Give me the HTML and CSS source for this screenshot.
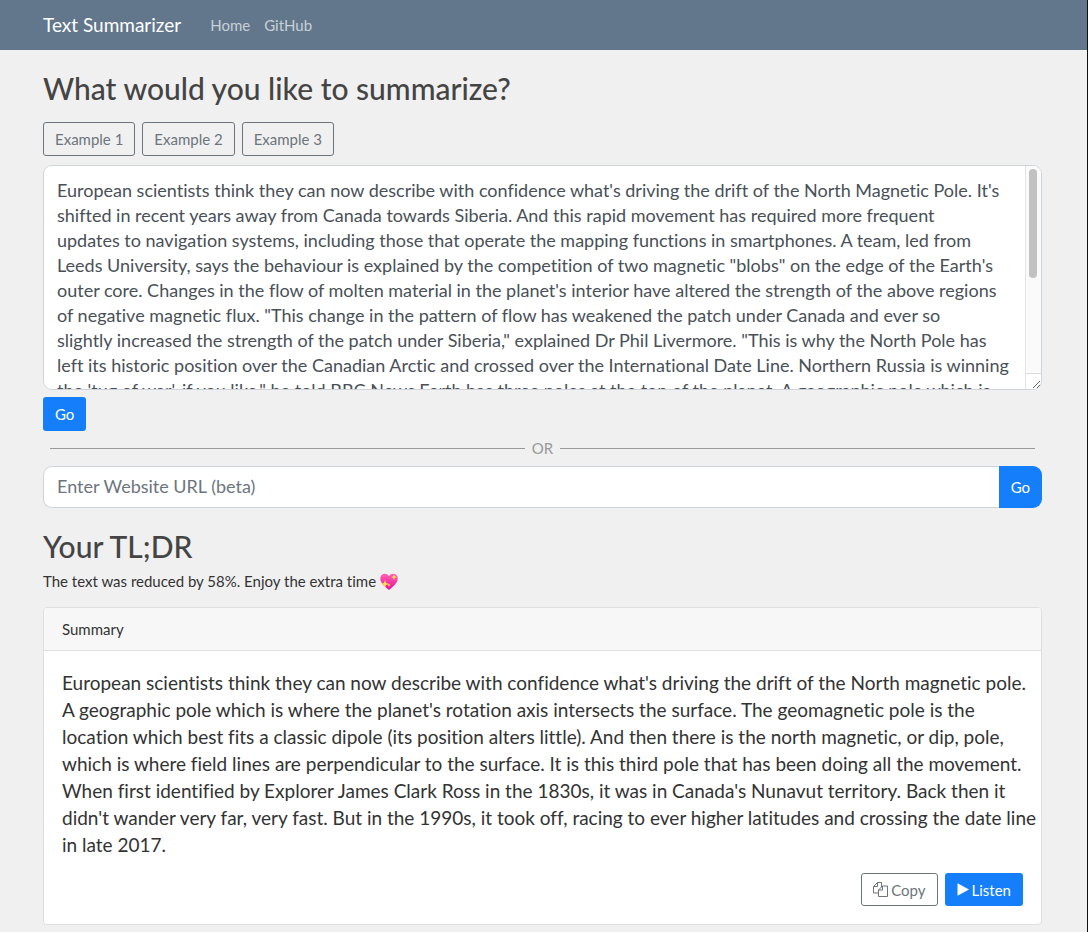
FILE: index.html
```html
<!DOCTYPE html>
<html lang="en">
<head>
<meta charset="utf-8">
<meta name="viewport" content="width=device-width, initial-scale=1">
<title>Text Summarizer</title>
<link rel="stylesheet" href="styles.css">
</head>
<body>
<header class="navbar">
  <a class="brand" href="#">Text Summarizer</a>
  <nav class="nav-links">
    <a href="#">Home</a>
    <a href="#">GitHub</a>
  </nav>
</header>
<main class="container">
  <h1 class="title"><label for="source">What would you like to summarize?</label></h1>
  <div class="examples">
    <button class="btn btn-outline" type="button">Example 1</button>
    <button class="btn btn-outline" type="button">Example 2</button>
    <button class="btn btn-outline" type="button">Example 3</button>
  </div>
  <div class="source-box">
    <textarea class="source" id="source">European scientists think they can now describe with confidence what's driving the drift of the North Magnetic Pole. It's
shifted in recent years away from Canada towards Siberia. And this rapid movement has required more frequent
updates to navigation systems, including those that operate the mapping functions in smartphones. A team, led from
Leeds University, says the behaviour is explained by the competition of two magnetic "blobs" on the edge of the Earth's
outer core. Changes in the flow of molten material in the planet's interior have altered the strength of the above regions
of negative magnetic flux. "This change in the pattern of flow has weakened the patch under Canada and ever so
slightly increased the strength of the patch under Siberia," explained Dr Phil Livermore. "This is why the North Pole has
left its historic position over the Canadian Arctic and crossed over the International Date Line. Northern Russia is winning
the 'tug of war', if you like," he told BBC News.Earth has three poles at the top of the planet. A geographic pole which is
where the planet's rotation axis intersects the surface. The geomagnetic pole is the location which best fits a classic
dipole (its position alters little). And then there is the north magnetic, or dip, pole, which is where field lines are
perpendicular to the surface. It is this third pole that has been doing all the movement. When first identified by
Explorer James Clark Ross in the 1830s, it was in Canada's Nunavut territory. Back then it didn't wander very far,
very fast. But in the 1990s, it took off, racing to ever higher latitudes and crossing the date line in late 2017.
In the process, it came to within just a few hundred kilometres of the geographic pole.</textarea>
    <div class="scrollbar" aria-hidden="true">
      <div class="scrollbar-track"><div class="scrollbar-thumb"></div></div>
    </div>
  </div>
  <button class="btn btn-primary" type="button">Go</button>
  <div class="divider">OR</div>
  <form class="url-form">
    <input class="url-input" type="url" placeholder="Enter Website URL (beta)" aria-label="Website URL">
    <button class="btn btn-primary url-go" type="button">Go</button>
  </form>
  <h2 class="title result-title">Your TL;DR</h2>
  <p class="note">The text was reduced by 58%. Enjoy the extra time
    <svg class="heart" viewBox="0 0 18 18" role="img" aria-label="sparkling heart">
      <defs><linearGradient id="pink" x1="0" y1="0" x2="0" y2="1"><stop offset="0" stop-color="#ff5fb4"/><stop offset="1" stop-color="#e8149a"/></linearGradient></defs>
      <path fill="url(#pink)" d="M9 17C5 13.600.3 10 .3 5.500.3 2.500 2.400.700 4.800.700 6.700.700 8.200 1.700 9 3.200 9.800 1.700 11.300.700 13.200.700c2.400 0 4.500 1.800 4.500 4.800C17.700 10 13 13.600 9 17Z"/>
      <path fill="#ffe14d" d="m5 7 1 2.800L8.800 11 6 12l-1 2.800L4 12l-2.800-1L4 9.800ZM14 1.200l.8 2.100 2.100.9-2.100.8-.8 2.100-.8-2.100-2.100-.8 2.100-.9ZM9 10.500l.5 1.100 1.100.5-1.100.5L9 13.700l-.5-1.100-1.100-.5 1.100-.5Z"/>
    </svg>
  </p>
  <section class="card">
    <h3 class="card-header">Summary</h3>
    <div class="card-body">
      <p class="summary">European scientists think they can now describe with confidence what's driving the drift of the North magnetic pole.<br>
      A geographic pole which is where the planet's rotation axis intersects the surface. The geomagnetic pole is the<br>
      location which best fits a classic dipole (its position alters little). And then there is the north magnetic, or dip, pole,<br>
      which is where field lines are perpendicular to the surface. It is this third pole that has been doing all the movement.<br>
      When first identified by Explorer James Clark Ross in the 1830s, it was in Canada's Nunavut territory. Back then it<br>
      didn't wander very far, very fast. But in the 1990s, it took off, racing to ever higher latitudes and crossing the date line<br>
      in late 2017.</p>
      <div class="actions">
        <button class="btn btn-outline" type="button">
          <svg class="icon-copy" viewBox="0 0 15 15" aria-hidden="true"><path d="M4.500.500h4v3.500M4.500.500l-4 4v6.500h5M4.500.500v4h-4M9.500 4h5v10.500h-9V8ZM9.500 4v4h-4M8.500.500v4.500"/></svg>
          Copy</button>
        <button class="btn btn-primary" type="button">
          <svg class="icon-play" viewBox="0 0 12 13" aria-hidden="true"><path d="M.5.3v12.400L12 6.500Z"/></svg>
          Listen</button>
      </div>
    </div>
  </section>
</main>
</body>
</html>
```
FILE: styles.css
```css
* { box-sizing: border-box; }

body {
  margin: 0;
  min-height: 100vh;
  border-right: 1px solid #111;
  background: #f0f0f0;
  color: #333;
  font-family: Lato, sans-serif;
  font-size: 15px;
  font-variant-ligatures: none;
  line-height: 22px;
}

.navbar {
  display: flex;
  align-items: center;
  gap: 29px;
  padding: 10px 43px;
  background: #62778b;
}
.brand { color: #fff; font-size: 19px; line-height: 30px; text-decoration: none; }
.nav-links { display: flex; gap: 14px; }
.nav-links a { color: #c8d0d7; text-decoration: none; }

.container { padding: 21px 45px 7px 43px; }

.title {
  margin: 0 0 17px;
  color: #444;
  font-size: 30px;
  font-weight: 500;
  line-height: 34px;
}

.btn {
  display: inline-flex;
  align-items: center;
  justify-content: center;
  gap: 3px;
  height: 34px;
  padding: 0 11px;
  border: 1px solid transparent;
  border-radius: 3px;
  font: inherit;
  cursor: pointer;
}
.btn-outline { background: transparent; border-color: #6c757d; color: #6c757d; }
.btn-primary { background: #157efb; color: #fff; }

.examples { display: flex; gap: 7px; margin-bottom: 9px; }

.source-box { position: relative; margin-bottom: 7px; }
.source {
  display: block;
  width: 100%;
  height: 225px;
  padding: 12px 13px;
  border: 1px solid #ced4da;
  border-radius: 9px;
  background: #fff;
  color: #495057;
  font: 18px/25px Lato, sans-serif;
  font-variant-ligatures: none;
  resize: both;
  scrollbar-width: none;
}
.scrollbar {
  position: absolute;
  top: 1px;
  right: 1px;
  bottom: 1px;
  width: 16px;
  padding-bottom: 15px;
  border-left: 1px solid #e4e4e4;
  border-radius: 0 8px 8px 0;
  pointer-events: none;
}
.scrollbar-track {
  height: 100%;
  padding: 3px;
  border-bottom: 1px solid #dcdcdc;
  border-radius: 0 8px 0 0;
  background: #fafafa;
}
.scrollbar-thumb { width: 8px; height: 109px; border-radius: 4px; background: #c1c1c1; }

.divider {
  display: flex;
  align-items: center;
  gap: 7px;
  margin: 6px 7px 7px;
  color: #999;
}
.divider::before,
.divider::after { content: ""; flex: 1; border-top: 1px solid #999; }

.url-form { display: flex; margin-bottom: 21px; }
.url-input {
  flex: 1;
  min-width: 0;
  height: 42px;
  padding: 0 13px 2px;
  border: 1px solid #ced4da;
  border-right: 0;
  border-radius: 9px 0 0 9px;
  background: #fff;
  color: #495057;
  font: 18px/25px Lato, sans-serif;
}
.url-input::placeholder { color: #6c757d; opacity: 1; }
.url-go { height: 42px; border-radius: 0 9px 9px 0; }

.result-title { margin-bottom: 7px; }
.note { margin: 0 0 15px; }
.heart { width: 18px; height: 18px; vertical-align: -4px; }

.card { border: 1px solid #dfdfdf; border-radius: 4px; background: #fff; }
.card-header {
  margin: 0;
  padding: 10px 18px;
  border-bottom: 1px solid #dfdfdf;
  border-radius: 3px 3px 0 0;
  background: #f7f7f7;
  font-size: 15px;
  font-weight: 400;
}
.card-body { padding: 18px; }
.summary { margin: 0 -14px 15px 0; font-size: 19px; line-height: 27px; }
.actions { display: flex; justify-content: flex-end; gap: 7px; }
.actions .btn { height: 33px; }
.icon-copy { width: 15px; height: 15px; fill: none; stroke: currentColor; }
.icon-play { width: 12px; height: 13px; fill: currentColor; }
```
